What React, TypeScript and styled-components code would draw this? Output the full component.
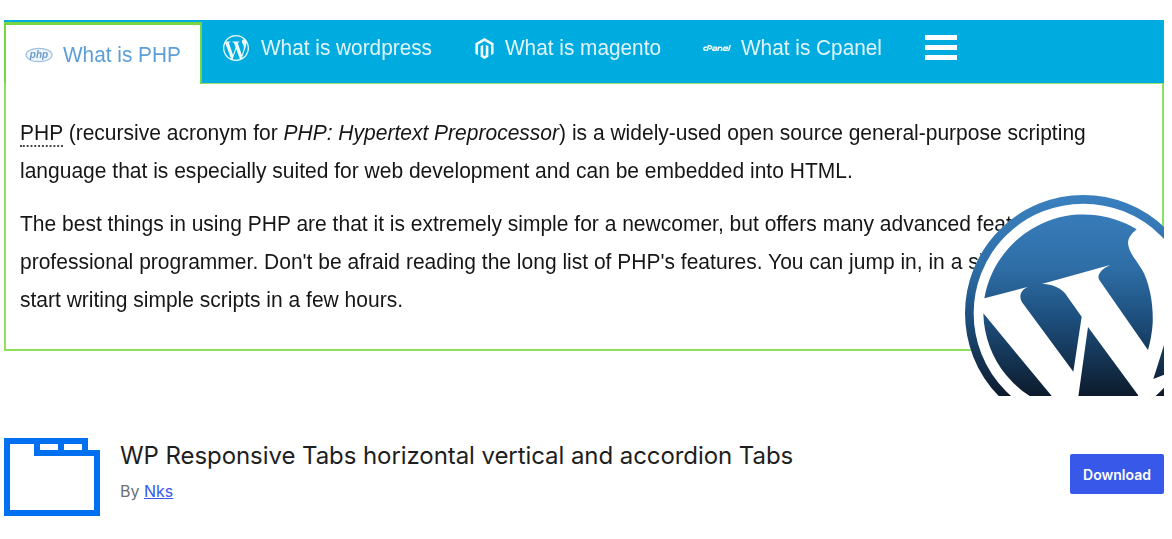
import React from "react";
import styled, { createGlobalStyle } from "styled-components";
import { SiCpanel, SiMagento, SiWordpress } from "react-icons/si";

const Global = createGlobalStyle`
  html, body { margin: 0; padding: 0; background: #fff; }
  body { font-family: Inter, "Liberation Sans", sans-serif; overflow: hidden; }
`;

const Page = styled.div`
  width: 1172px;
  height: 539px;
  box-sizing: border-box;
  padding: 20px 8px 0 4px;
  display: flex;
  flex-direction: column;
`;

const Banner = styled.section`
  position: relative;
  height: 376px;
  overflow: hidden;
  font-family: "Liberation Sans", Arial, sans-serif;
`;

const TabBar = styled.nav`
  height: 64px;
  box-sizing: border-box;
  display: flex;
  background: #00abdf;
  border-bottom: 1px solid #9be06f;
  filter: blur(0.45px);
`;

const Tab = styled.div<{ $active?: boolean }>`
  display: flex;
  align-items: center;
  box-sizing: border-box;
  height: ${(p) => (p.$active ? "62px" : "56px")};
  margin-top: ${(p) => (p.$active ? "2px" : "0")};
  padding: ${(p) => (p.$active ? "0 19px" : "0 21px")};
  gap: 10px;
  font-size: 22px;
  white-space: nowrap;
  color: ${(p) => (p.$active ? "#5c9fd8" : "#e0f5fb")};
  background: ${(p) => (p.$active ? "#fff" : "transparent")};
  ${(p) =>
    p.$active
      ? "border-top: 3px solid #75d843; border-left: 2px solid #75d843; border-right: 2px solid #75d843;"
      : ""}
`;

const TabLabel = styled.span<{ $width: number }>`
  display: block;
  width: ${(p) => p.$width}px;
  transform: scaleX(0.945);
  transform-origin: left center;
`;

const Burger = styled.div`
  margin: 15px 0 0 21px;
  width: 32px;
  height: 25px;
  display: flex;
  flex-direction: column;
  justify-content: space-between;
  span {
    display: block;
    height: 5px;
    background: #fff;
  }
`;

const Panel = styled.div`
  height: 268px;
  box-sizing: border-box;
  margin-top: -1px;
  padding: 31px 14px 0;
  border: 2px solid #8fdf5f;
  border-top: none;
  color: #161616;
  font-size: 22px;
  line-height: 38px;
  filter: blur(0.4px);
  p {
    margin: 0 0 15px;
    width: 1171px;
    transform: scaleX(0.955);
    transform-origin: left top;
  }
  abbr {
    text-decoration: none;
    border-bottom: 2px dotted #444;
  }
`;

const Logo = styled.svg`
  position: absolute;
  left: 956px;
  top: 170px;
  width: 212px;
  height: 212px;
  filter: blur(0.6px);
`;

const Info = styled.div`
  margin-top: 42px;
  display: flex;
  align-items: flex-start;
`;

const PluginIcon = styled.svg`
  width: 96px;
  height: 78px;
  flex: none;
  display: block;
`;

const Meta = styled.div`
  margin-left: 20px;
  flex: 1;
`;

const Title = styled.h2`
  margin: 0;
  font-size: 24px;
  font-weight: 400;
  line-height: 36px;
  letter-spacing: -0.07px;
  color: #1e1e1e;
`;

const Byline = styled.div`
  margin-top: 7px;
  font-size: 16px;
  line-height: 20px;
  color: #6b7078;
  a {
    color: #3858e9;
    text-decoration: underline;
  }
`;

const Download = styled.button`
  margin-top: 16px;
  width: 94px;
  height: 40px;
  border: none;
  border-radius: 2px;
  background: #3858e9;
  color: #fff;
  font-family: inherit;
  font-size: 14px;
  font-weight: 600;
`;

const PhpIcon = () => (
  <svg width="28" height="16" viewBox="0 0 28 16" aria-hidden="true">
    <ellipse cx="14" cy="8" rx="13" ry="6.6" fill="#eef5fb" stroke="#9dbfe0" strokeWidth="1.2" />
    <text x="14" y="11" textAnchor="middle" fontSize="10" fontStyle="italic" fontWeight="700" fontFamily="Liberation Sans" fill="#6f9ccb">
      php
    </text>
  </svg>
);

const CAP =
  "M133 355 A303 303 0 0 1 590 148 C570 165 560 180 566 200 C572 225 600 255 612 280 C632 325 640 380 638 430 C636 460 630 490 624 510 L480 303 C468 288 480 270 510 255 L305 312 C330 312 355 318 375 340 L425 410 L400 575 L245 365 C235 345 245 328 265 320 Z";
const LEFT = "M130 400 L370 690 A303 303 0 0 1 130 400 Z";
const MID = "M444 441 L594 645 L594 700 L408 700 Z";
const RIGHT = "M640 597 L680 470 L720 470 L720 565 Z";

export default function App() {
  return (
    <Page>
      <Global />
      <Banner>
        <TabBar>
          <Tab $active>
            <PhpIcon />
            <TabLabel $width={118}>What is PHP</TabLabel>
          </Tab>
          <Tab>
            <SiWordpress size={26} color="#eefafd" style={{ marginRight: 2 }} />
            <TabLabel $width={171}>What is wordpress</TabLabel>
          </Tab>
          <Tab>
            <SiMagento size={21} color="#eefafd" />
            <TabLabel $width={156}>What is magento</TabLabel>
          </Tab>
          <Tab>
            <SiCpanel size={28} color="#eefafd" />
            <TabLabel $width={142}>What is Cpanel</TabLabel>
          </Tab>
          <Burger>
            <span />
            <span />
            <span />
          </Burger>
        </TabBar>
        <Panel>
          <p>
            <abbr>PHP</abbr> (recursive acronym for <em>PHP: Hypertext Preprocessor</em>) is a widely-used open source general-purpose scripting language that is especially suited for web development and can be embedded into HTML.
          </p>
          <p>
            The best things in using PHP are that it is extremely simple for a newcomer, but offers many advanced features for a professional programmer. Don't be afraid reading the long list of PHP's features. You can jump in, in a short time, and start writing simple scripts in a few hours.
          </p>
        </Panel>
        <Logo viewBox="60 30 636 636" aria-hidden="true">
          <defs>
            <linearGradient id="wpg" gradientUnits="userSpaceOnUse" x1="0" y1="45" x2="0" y2="650">
              <stop offset="0" stopColor="#3a80bf" />
              <stop offset="0.35" stopColor="#2f6fa8" />
              <stop offset="0.62" stopColor="#1d4e7c" />
              <stop offset="1" stopColor="#0c1a2b" />
            </linearGradient>
          </defs>
          <circle cx="430" cy="400" r="355" fill="#fff" />
          <circle cx="430" cy="400" r="342" fill="none" stroke="url(#wpg)" strokeWidth="26" />
          <path d={CAP} fill="url(#wpg)" />
          <path d={LEFT} fill="url(#wpg)" />
          <path d={MID} fill="url(#wpg)" />
          <path d={RIGHT} fill="url(#wpg)" />
        </Logo>
      </Banner>
      <Info>
        <PluginIcon viewBox="0 0 96 78" aria-hidden="true">
          <path
            fillRule="evenodd"
            fill="#0070f0"
            d="M0 0H84V12H96V78H0ZM6 6V72H90V18H30V6ZM36 6V12H54V6ZM60 6V12H78V6Z"
          />
        </PluginIcon>
        <Meta>
          <Title>WP Responsive Tabs horizontal vertical and accordion Tabs</Title>
          <Byline>
            By <a href="#nks">Nks</a>
          </Byline>
        </Meta>
        <Download>Download</Download>
      </Info>
    </Page>
  );
}
